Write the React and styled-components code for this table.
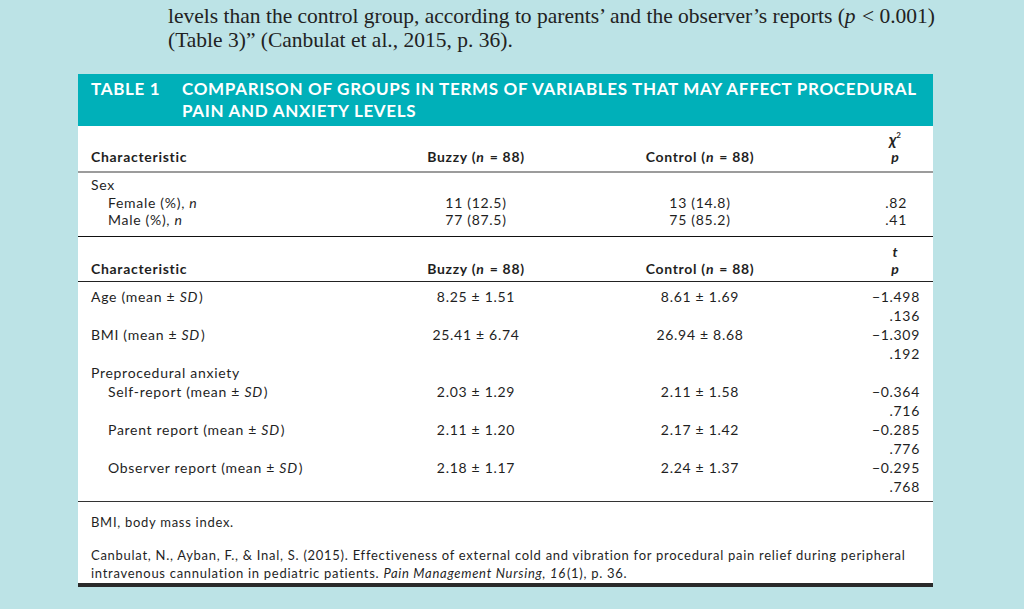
import React from 'react';
import styled, { createGlobalStyle } from 'styled-components';

const GlobalStyle = createGlobalStyle`
  html, body { margin: 0; padding: 0; background: #bce3e6; }
  body { font-family: Lato, "Open Sans", sans-serif; color: #1f1f1f; }
`;

const Page = styled.div`
  width: 1024px;
  height: 609px;
  overflow: hidden;
  background: #bce3e6;
`;

const Intro = styled.p`
  margin: 0 0 0 168px;
  padding-top: 4px;
  width: 820px;
  font-family: "Liberation Serif", "Times New Roman", serif;
  font-size: 21.5px;
  line-height: 24px;
  color: #222;
`;

const Card = styled.section`
  margin: 22px 0 0 78px;
  width: 855px;
  background: #fff;
  border-bottom: 4px solid #2a2a2a;
`;

const Banner = styled.header`
  display: flex;
  align-items: flex-start;
  box-sizing: border-box;
  height: 52px;
  padding: 4px 13px 0;
  background: #00b0b9;
  color: #fff;
  font-family: Lato, "Open Sans", sans-serif;
  font-weight: 700;
  font-size: 17px;
  line-height: 22px;
  letter-spacing: 0.68px;
  white-space: nowrap;
`;

const BannerLabel = styled.span`
  flex: 0 0 91px;
`;

const BannerTitle = styled.h2`
  margin: 0;
  font: inherit;
`;

const Body = styled.div`
  font-size: 14px;
  letter-spacing: 0.7px;
`;

const columns = '319px 132px 316px 62px';

const HeadRow = styled.div`
  display: grid;
  grid-template-columns: ${columns};
  align-items: end;
  padding: ${(p) => p.$top}px 13px ${(p) => p.$bottom}px;
  border-bottom: ${(p) => p.$rule};
  font-weight: 700;
  line-height: 17px;
`;

const HeadLabel = styled.div``;

const HeadGroup = styled.div`
  text-align: center;
`;

const HeadStat = styled.div`
  display: flex;
  flex-direction: column;
  align-items: center;
  padding-left: 12px;
  font-style: italic;
  letter-spacing: 0;
`;

const Chi = styled.span`
  font-size: 16px;
  line-height: 17px;
`;

const Section = styled.div`
  padding: ${(p) => p.$top}px 0 ${(p) => p.$bottom}px;
  border-bottom: ${(p) => p.$rule};
`;

const DataRow = styled.div`
  display: grid;
  grid-template-columns: ${columns};
  padding: 0 13px;
  line-height: ${(p) => p.$lh}px;
`;

const Label = styled.div`
  padding-left: ${(p) => (p.$indent ? 17 : 0)}px;
`;

const Group = styled.div`
  text-align: center;
`;

const Stat = styled.div`
  display: flex;
  flex-direction: column;
  align-items: flex-end;
  padding-right: ${(p) => p.$pad || 0}px;
`;

const Footer = styled.div`
  padding: 11px 13px 1px;
  font-size: 13px;
  line-height: 18px;
  letter-spacing: 0.72px;
`;

const Note = styled.p`
  margin: 0 0 ${(p) => p.$gap}px;
`;

const I = styled.i`
  font-style: italic;
  padding-right: 1px;
`;

const Sup = styled.sup`
  font-size: 8px;
  line-height: 0;
  vertical-align: 7px;
  font-style: normal;
`;

const ChiSq = () => (
  <Chi>
    χ<Sup>2</Sup>
  </Chi>
);

const sexRows = [
  { label: 'Female (%), ', buzzy: '11 (12.5)', control: '13 (14.8)', p: '.82' },
  { label: 'Male (%), ', buzzy: '77 (87.5)', control: '75 (85.2)', p: '.41' },
];

const meanRows = [
  { label: 'Age (mean ± ', buzzy: '8.25 ± 1.51', control: '8.61 ± 1.69', t: '−1.498', p: '.136' },
  { label: 'BMI (mean ± ', buzzy: '25.41 ± 6.74', control: '26.94 ± 8.68', t: '−1.309', p: '.192' },
];

const anxietyRows = [
  { label: 'Self-report (mean ± ', buzzy: '2.03 ± 1.29', control: '2.11 ± 1.58', t: '−0.364', p: '.716' },
  { label: 'Parent report (mean ± ', buzzy: '2.11 ± 1.20', control: '2.17 ± 1.42', t: '−0.285', p: '.776' },
  { label: 'Observer report (mean ± ', buzzy: '2.18 ± 1.17', control: '2.24 ± 1.37', t: '−0.295', p: '.768' },
];

const ColumnHeads = ({ stat, top, bottom, rule }) => (
  <HeadRow $top={top} $bottom={bottom} $rule={rule}>
    <HeadLabel>Characteristic</HeadLabel>
    <HeadGroup>
      Buzzy (<I>n</I> = 88)
    </HeadGroup>
    <HeadGroup>
      Control (<I>n</I> = 88)
    </HeadGroup>
    <HeadStat>
      <span>{stat}</span>
      <span>p</span>
    </HeadStat>
  </HeadRow>
);

export default function App() {
  return (
    <Page>
      <GlobalStyle />
      <Intro>
        levels than the control group, according to parents’ and the observer’s reports (<I>p</I> &lt; 0.001)
        <br />
        (Table 3)” (Canbulat et al., 2015, p. 36).
      </Intro>
      <Card>
        <Banner>
          <BannerLabel>TABLE 1</BannerLabel>
          <BannerTitle>
            COMPARISON OF GROUPS IN TERMS OF VARIABLES THAT MAY AFFECT PROCEDURAL
            <br />
            PAIN AND ANXIETY LEVELS
          </BannerTitle>
        </Banner>
        <Body>
          <ColumnHeads stat={<ChiSq />} top={4} bottom={6} rule="2px solid #9c9c9c" />
          <Section $top={3} $bottom={7.5} $rule="1px solid #111">
            <DataRow $lh={17.5}>
              <Label>Sex</Label>
            </DataRow>
            {sexRows.map((r) => (
              <DataRow key={r.label} $lh={17.5}>
                <Label $indent>
                  {r.label}
                  <I>n</I>
                </Label>
                <Group>{r.buzzy}</Group>
                <Group>{r.control}</Group>
                <Stat $pad={13}>{r.p}</Stat>
              </DataRow>
            ))}
          </Section>
          <ColumnHeads stat="t" top={6} bottom={4} rule="1px solid #222" />
          <Section $top={5} $bottom={5} $rule="1px solid #333">
            {meanRows.map((r) => (
              <DataRow key={r.label} $lh={19}>
                <Label>
                  {r.label}
                  <I>SD</I>)
                </Label>
                <Group>{r.buzzy}</Group>
                <Group>{r.control}</Group>
                <Stat>
                  <span>{r.t}</span>
                  <span>{r.p}</span>
                </Stat>
              </DataRow>
            ))}
            <DataRow $lh={19}>
              <Label>Preprocedural anxiety</Label>
            </DataRow>
            {anxietyRows.map((r) => (
              <DataRow key={r.label} $lh={19}>
                <Label $indent>
                  {r.label}
                  <I>SD</I>)
                </Label>
                <Group>{r.buzzy}</Group>
                <Group>{r.control}</Group>
                <Stat>
                  <span>{r.t}</span>
                  <span>{r.p}</span>
                </Stat>
              </DataRow>
            ))}
          </Section>
        </Body>
        <Footer>
          <Note $gap={15}>BMI, body mass index.</Note>
          <Note $gap={0}>
            Canbulat, N., Ayban, F., &amp; Inal, S. (2015). Effectiveness of external cold and vibration for procedural pain relief during peripheral intravenous cannulation in pediatric patients. <I>Pain Management Nursing, 16</I>(1), p. 36.
          </Note>
        </Footer>
      </Card>
    </Page>
  );
}
